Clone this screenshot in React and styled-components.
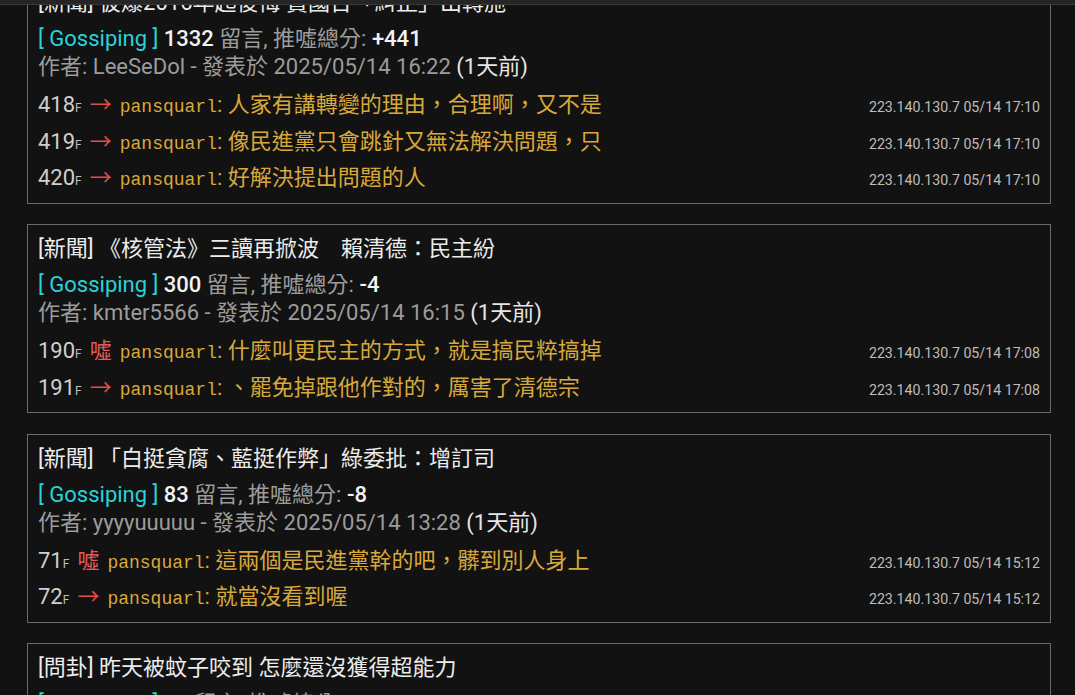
import styled, { createGlobalStyle } from 'styled-components'

const GlobalStyle = createGlobalStyle`
  html, body {
    margin: 0;
    padding: 0;
    background: #121212;
    overflow: hidden;
  }
  body {
    font-family: Roboto, "Noto Sans CJK TC", sans-serif;
    color: #e8e8e8;
  }
`

const posts = [
  {
    title: '[新聞] 彼爆2016年起後悔 賣國台「糾正」出轉施',
    board: 'Gossiping',
    count: 1332,
    score: '+441',
    author: 'LeeSeDol',
    date: '2025/05/14 16:22',
    ago: '1天前',
    comments: [
      { floor: 418, tag: 'arrow', user: 'pansquarl', text: '人家有講轉變的理由，合理啊，又不是', meta: '223.140.130.7 05/14 17:10' },
      { floor: 419, tag: 'arrow', user: 'pansquarl', text: '像民進黨只會跳針又無法解決問題，只', meta: '223.140.130.7 05/14 17:10' },
      { floor: 420, tag: 'arrow', user: 'pansquarl', text: '好解決提出問題的人', meta: '223.140.130.7 05/14 17:10' }
    ]
  },
  {
    title: '[新聞] 《核管法》三讀再掀波　賴清德：民主紛',
    board: 'Gossiping',
    count: 300,
    score: '-4',
    author: 'kmter5566',
    date: '2025/05/14 16:15',
    ago: '1天前',
    comments: [
      { floor: 190, tag: 'boo', user: 'pansquarl', text: '什麼叫更民主的方式，就是搞民粹搞掉', meta: '223.140.130.7 05/14 17:08' },
      { floor: 191, tag: 'arrow', user: 'pansquarl', text: '、罷免掉跟他作對的，厲害了清德宗', meta: '223.140.130.7 05/14 17:08' }
    ]
  },
  {
    title: '[新聞] 「白挺貪腐、藍挺作弊」綠委批：增訂司',
    board: 'Gossiping',
    count: 83,
    score: '-8',
    author: 'yyyyuuuuu',
    date: '2025/05/14 13:28',
    ago: '1天前',
    comments: [
      { floor: 71, tag: 'boo', user: 'pansquarl', text: '這兩個是民進黨幹的吧，髒到別人身上', meta: '223.140.130.7 05/14 15:12' },
      { floor: 72, tag: 'arrow', user: 'pansquarl', text: '就當沒看到喔', meta: '223.140.130.7 05/14 15:12' }
    ]
  },
  {
    title: '[問卦] 昨天被蚊子咬到 怎麼還沒獲得超能力',
    board: 'Gossiping',
    count: 52,
    score: '+3',
    author: 'bigbird',
    date: '2025/05/14 12:40',
    ago: '1天前',
    comments: []
  }
]

// sticky app bar, mostly scrolled away
const TopBar = styled.div`
  position: fixed;
  top: 0;
  left: 0;
  right: 0;
  height: 4px;
  background: #252525;
  border-bottom: 1px solid #3a3a3a;
  z-index: 2;
`

const Feed = styled.main`
  display: flex;
  flex-direction: column;
  gap: 20.5px;
  margin-top: -22px;
  padding: 0 24px 0 27px;
`

const Card = styled.article`
  display: flex;
  flex-direction: column;
  border: 1px solid #6b6b6b;
  padding: 8px 10px 6px 10px;
`

const Title = styled.div`
  font-size: 22px;
  line-height: 32px;
  color: #ececec;
  white-space: nowrap;
  margin-bottom: 6px;
`

const InfoLine = styled.div`
  font-size: 22px;
  line-height: 28px;
  color: #9c9c9c;
  white-space: nowrap;
`

const Board = styled.span`
  color: #27d2da;
`

const Strong = styled.span`
  color: #f2f2f2;
  font-weight: 500;
`

const Ago = styled.span`
  color: #e6e6e6;
`

const Comments = styled.div`
  display: flex;
  flex-direction: column;
  margin-top: 6px;
`

const Row = styled.div`
  display: flex;
  align-items: baseline;
  justify-content: space-between;
  height: 36.5px;
  line-height: 36.5px;
  white-space: nowrap;
`

const Left = styled.div`
  display: flex;
  align-items: baseline;
  font-size: 22px;
`

const Floor = styled.span`
  color: #cfcfcf;
`

const FloorMark = styled.span`
  font-size: 12px;
  color: #bdbdbd;
  margin-right: 8px;
`

const Tag = styled.span`
  color: ${(props) => (props.$boo ? '#e05a5a' : '#e24c4c')};
  margin-right: 8px;
`

const User = styled.span`
  font-family: "Liberation Mono", monospace;
  font-size: 18px;
  color: #d9a83b;
`

const Text = styled.span`
  color: #d9a83b;
`

const Meta = styled.span`
  font-size: 14.2px;
  color: #bdbdbd;
`

const Comment = ({ c }) => (
  <Row>
    <Left>
      <Floor>{c.floor}</Floor>
      <FloorMark>F</FloorMark>
      <Tag $boo={c.tag === 'boo'}>{c.tag === 'boo' ? '噓' : '→'}</Tag>
      <User>{c.user}</User>
      <Text>: {c.text}</Text>
    </Left>
    <Meta>{c.meta}</Meta>
  </Row>
)

const Post = ({ post }) => (
  <Card>
    <Title>{post.title}</Title>
    <InfoLine>
      <Board>[ Gossiping ]</Board> <Strong>{post.count}</Strong> 留言, 推噓總分: <Strong>{post.score}</Strong>
    </InfoLine>
    <InfoLine>
      作者: {post.author} - 發表於 {post.date} <Ago>({post.ago})</Ago>
    </InfoLine>
    {post.comments.length > 0 && (
      <Comments>
        {post.comments.map((c) => <Comment key={c.floor} c={c} />)}
      </Comments>
    )}
  </Card>
)

export default function App() {
  return (
    <>
      <GlobalStyle />
      <TopBar />
      <Feed>
        {posts.map((p) => <Post key={p.title} post={p} />)}
      </Feed>
    </>
  )
}
